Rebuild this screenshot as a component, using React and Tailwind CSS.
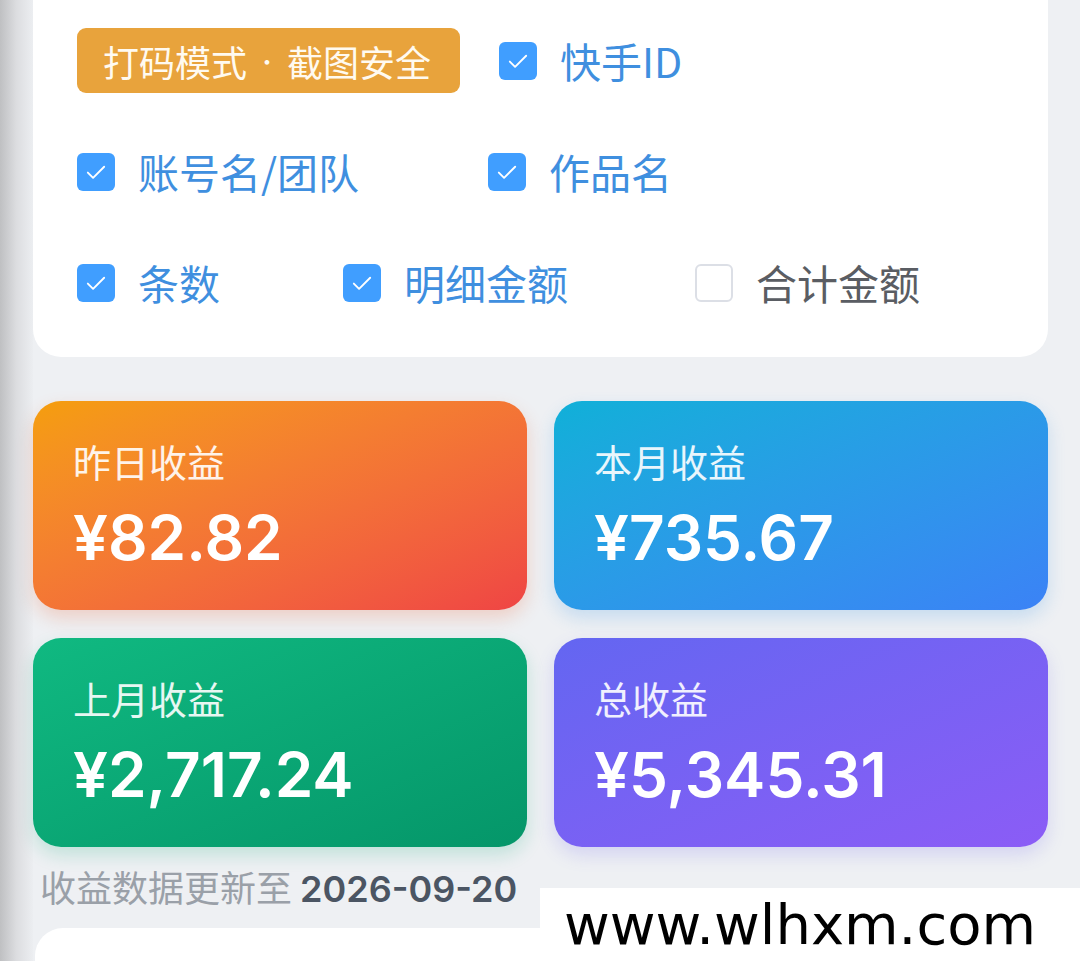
import React from "react";

const CJK = { fontFamily: '"Noto Sans CJK SC", "Noto Sans", sans-serif' };
const NUM = { fontFamily: 'Inter, "Noto Sans", "Noto Sans CJK SC", sans-serif' };

const CARDS = [
  { label: "昨日收益", value: "¥82.82", bg: "bg-gradient-to-br from-[#f59e0b] to-[#ef4444]", shadow: "shadow-[0_8px_18px_rgba(239,90,40,0.22)]" },
  { label: "本月收益", value: "¥735.67", bg: "bg-gradient-to-br from-[#0fb0d8] to-[#3b82f6]", shadow: "shadow-[0_8px_18px_rgba(40,140,230,0.2)]" },
  { label: "上月收益", value: "¥2,717.24", bg: "bg-gradient-to-br from-[#10b981] to-[#059669]", shadow: "shadow-[0_8px_18px_rgba(16,170,120,0.2)]" },
  { label: "总收益", value: "¥5,345.31", bg: "bg-gradient-to-br from-[#6366f1] to-[#8b5cf6]", shadow: "shadow-[0_8px_18px_rgba(110,100,240,0.2)]" },
];

const Box = ({ checked }) => (
  <span
    className={`w-[38px] h-[38px] shrink-0 rounded-[6px] flex items-center justify-center ${
      checked ? "bg-[#409eff]" : "bg-white border-2 border-[#dcdfe6]"
    }`}
  >
    {checked && (
      <svg width="28" height="28" viewBox="0 0 24 24" fill="none" stroke="white" strokeWidth="1.6" strokeLinecap="round" strokeLinejoin="round">
        <path d="M5 12.5l4.5 4.5L19 7.5" />
      </svg>
    )}
  </span>
);

const Option = ({ label, checked = true, className = "" }) => (
  <div className={`flex items-center gap-[23px] ${className}`}>
    <Box checked={checked} />
    <span className={`text-[41px] leading-none ${checked ? "text-[#3f8fdf]" : "text-[#5a5d63]"}`}>{label}</span>
  </div>
);

export default function App() {
  return (
    <div className="relative w-[1080px] h-[961px] overflow-hidden bg-[#eef0f3] flex" style={CJK}>
      {/* edge shadow from the previous screen */}
      <div className="w-[33px] shrink-0 bg-gradient-to-r from-[#bfc0c2] via-[#dcdde0] to-[#eceef1]" />

      <div className="flex-1 pr-[32px] flex flex-col">
        {/* display options */}
        <div className="bg-white rounded-b-[28px] pl-[44px] pt-[28px] pb-[42px] flex flex-col gap-[46px]">
          <div className="flex items-center h-[65px]">
            <span className="h-[65px] w-[383px] pl-[26px] rounded-[9px] bg-[#e8a33c] text-[#fffaf0] text-[36px] flex items-center whitespace-pre">
              打码模式<span className="text-[22px] mx-[9px]">·</span>截图安全
            </span>
            <Option label="快手ID" className="ml-[39px]" />
          </div>
          <div className="flex items-center h-[65px]">
            <Option label="账号名/团队" className="w-[411px]" />
            <Option label="作品名" />
          </div>
          <div className="flex items-center h-[65px]">
            <Option label="条数" className="w-[266px]" />
            <Option label="明细金额" className="w-[352px]" />
            <Option label="合计金额" checked={false} />
          </div>
        </div>

        {/* earnings */}
        <div className="grid grid-cols-2 gap-x-[27px] gap-y-[28px] mt-[44px]">
          {CARDS.map((c) => (
            <div key={c.label} className={`h-[209px] rounded-[28px] pl-[40px] pt-[36px] text-white ${c.bg} ${c.shadow}`}>
              <div className="text-[38px] leading-[48px] text-white/90">{c.label}</div>
              <div className="text-[62px] leading-[80px] font-semibold mt-[13px]" style={NUM}>
                {c.value}
              </div>
            </div>
          ))}
        </div>

        <div className="mt-[18px] pl-[7px] text-[36px] leading-[42px] text-[#9aa0a8]">
          收益数据更新至 <span className="text-[#4b5563] font-semibold text-[36px]" style={NUM}>2026-09-20</span>
        </div>

        <div className="mt-[18px] ml-[2px] flex-1 bg-white rounded-t-[28px]" />
      </div>

      {/* watermark */}
      <div
        className="absolute left-[540px] top-[888px] right-0 bottom-0 bg-white pl-[24px] text-black text-[56px] leading-[73px]"
        style={{ fontFamily: '"DejaVu Sans", sans-serif' }}
      >
        www.wlhxm.com
      </div>
    </div>
  );
}
